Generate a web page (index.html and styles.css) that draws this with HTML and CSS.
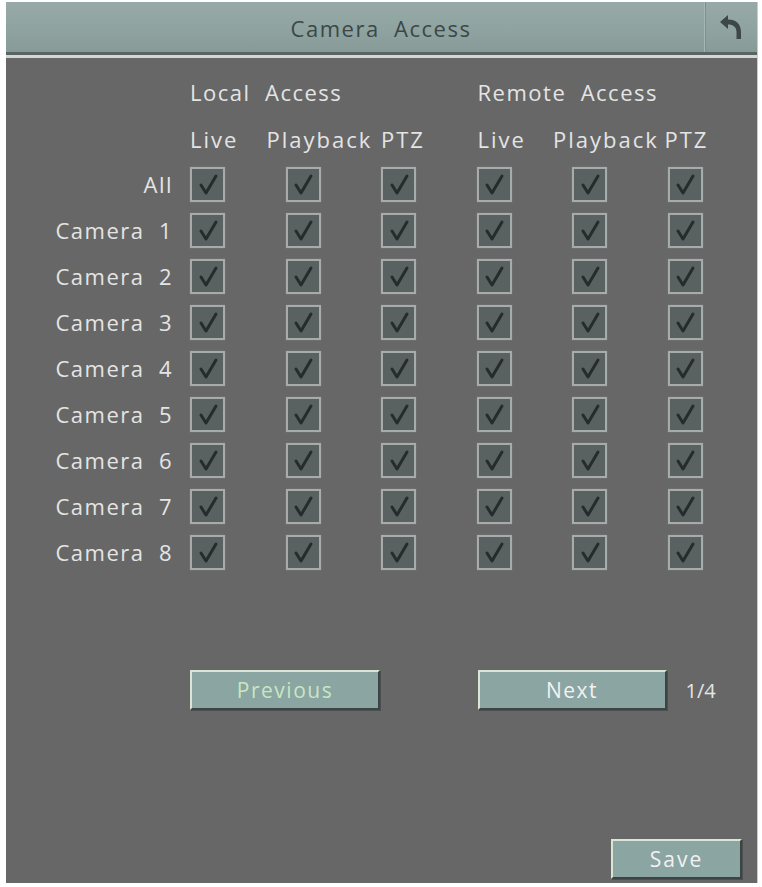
FILE: index.html
```html
<!DOCTYPE html>
<html lang="en">
<head>
    <meta charset="UTF-8">
    <title>Camera Access</title>
    <link rel="stylesheet" href="styles.css">
</head>
<body>
    <div class="panel">
        <div class="header">
            <div class="title">Camera&nbsp; Access</div>
            <div class="back">
                <svg width="28" height="30" viewBox="0 0 28 30">
                    <path d="M3 10 L11 3 L11 7.5 C19 7.5 24 12 24 20 L24 27 L19.5 27 L19.5 20 C19.5 15 16 12.5 11 12.5 L11 17 Z" fill="#3d4846"/>
                </svg>
            </div>
        </div>

        <div class="body">
            <div class="grid">
                <div class="group group-local">Local&nbsp; Access</div>
                <div class="group group-remote">Remote&nbsp; Access</div>

                <div class="colhead c1">Live</div>
                <div class="colhead c2 wide">Playback</div>
                <div class="colhead c3">PTZ</div>
                <div class="colhead c4">Live</div>
                <div class="colhead c5 wide">Playback</div>
                <div class="colhead c6 narrow">PTZ</div>
            </div>

            <div class="grid rows" id="rows"></div>

            <div class="grid pager">
                <button class="btn btn-prev">Previous</button>
                <button class="btn btn-next">Next</button>
                <div class="page">1/4</div>
            </div>

            <div class="footer">
                <button class="btn btn-save">Save</button>
            </div>
        </div>
    </div>

    <script>
        // build the camera rows, every box is ticked
        var labels = ["All", "Camera\u00a0 1", "Camera\u00a0 2", "Camera\u00a0 3", "Camera\u00a0 4",
                      "Camera\u00a0 5", "Camera\u00a0 6", "Camera\u00a0 7", "Camera\u00a0 8"];
        var tick = '<svg viewBox="0 0 30 30" width="30" height="30"><polyline points="8,16 13,24 23,7" fill="none" stroke="#262b2b" stroke-width="3" stroke-linecap="round" stroke-linejoin="round"/></svg>';
        var html = "";
        labels.forEach(function (name) {
            html += '<div class="label">' + name + '</div>';
            for (var i = 0; i < 6; i++) {
                html += '<div class="cell"><span class="check">' + tick + '</span></div>';
            }
        });
        document.getElementById("rows").innerHTML = html;
    </script>
</body>
</html>
```

FILE: styles.css
```css
html, body {
    margin: 0;
    background: #fff;
}

body {
    padding: 2px 4px 4px 6px;
    font-family: "Open Sans", "DejaVu Sans", sans-serif;
}

.panel {
    width: 752px;
    height: 881px;
    display: flex;
    flex-direction: column;
    background: #676767;
    border-right: 1px solid #c9cccb;
    box-sizing: border-box;
}

.header {
    height: 50px;
    display: flex;
    align-items: stretch;
    background: linear-gradient(180deg, #97aaa7 0%, #8ea2a0 60%, #879a98 100%);
    border-bottom: 3px solid #5a6463;
    box-shadow: 0 3px 0 #d3d8d7;
    margin-bottom: 3px;
}

.title {
    flex: 1;
    text-align: center;
    line-height: 52px;
    font-size: 22px;
    letter-spacing: 1.5px;
    color: #3b4847;
    padding-left: 52px;
}

.back {
    width: 52px;
    border-left: 1px solid #a6b6b4;
    box-shadow: inset 1px 0 0 #7f918f;
    display: flex;
    align-items: center;
    justify-content: center;
}

.body {
    flex: 1;
    display: flex;
    flex-direction: column;
    padding-top: 21px;
    color: #e4e4e4;
    font-size: 22px;
    letter-spacing: 1.5px;
}

.grid {
    display: grid;
    grid-template-columns: 184px repeat(6, 95.5px);
}

.group {
    line-height: 26px;
    grid-row: 1;
    white-space: nowrap;
}

.group-local {
    grid-column: 2 / span 3;
}

.group-remote {
    grid-column: 5 / span 3;
    margin-left: 1px;
}

.colhead {
    grid-row: 2;
    line-height: 26px;
    padding-top: 21px;
    padding-bottom: 9px;
    letter-spacing: 2px;
    white-space: nowrap;
}

.c1 { grid-column: 2; }
.c2 { grid-column: 3; }
.c3 { grid-column: 4; }
.c4 { grid-column: 5; margin-left: 1px; }
.c5 { grid-column: 6; }
.c6 { grid-column: 7; }

.colhead.wide {
    margin-left: -19px;
}

.colhead.narrow {
    margin-left: -3px;
}

.rows {
    grid-auto-rows: 46px;
}

.label {
    text-align: right;
    padding-right: 17px;
    line-height: 46px;
    white-space: nowrap;
}

.cell {
    display: flex;
    align-items: center;
}

.check {
    width: 31px;
    height: 31px;
    border: 2px solid #a7abaa;
    background: #5a6261;
    display: flex;
    align-items: center;
    justify-content: center;
    box-shadow: 0 0 1px #8a8f8e;
}

.check svg {
    display: block;
}

.pager {
    margin-top: 95px;
    align-items: center;
}

.btn {
    font-family: inherit;
    font-size: 21px;
    letter-spacing: 1.5px;
    height: 40px;
    padding: 0;
    background: #8aa5a2;
    color: #f2f2f2;
    border: 2px solid;
    border-color: #d9e6d6 #3d4443 #3d4443 #d9e6d6;
    box-shadow: 1px 1px 0 #4b5150;
}

.btn-prev {
    grid-column: 2 / span 2;
    width: 190px;
    color: #c9e6c3;
}

.btn-next {
    grid-column: 5 / span 2;
    width: 189px;
    margin-left: 1px;
}

.page {
    grid-column: 7;
    padding-left: 18px;
    font-size: 20px;
    letter-spacing: 0;
}

.footer {
    margin-top: auto;
    display: flex;
    justify-content: flex-end;
    padding: 0 15px 4px 0;
}

.btn-save {
    width: 131px;
    letter-spacing: 2px;
}
```
